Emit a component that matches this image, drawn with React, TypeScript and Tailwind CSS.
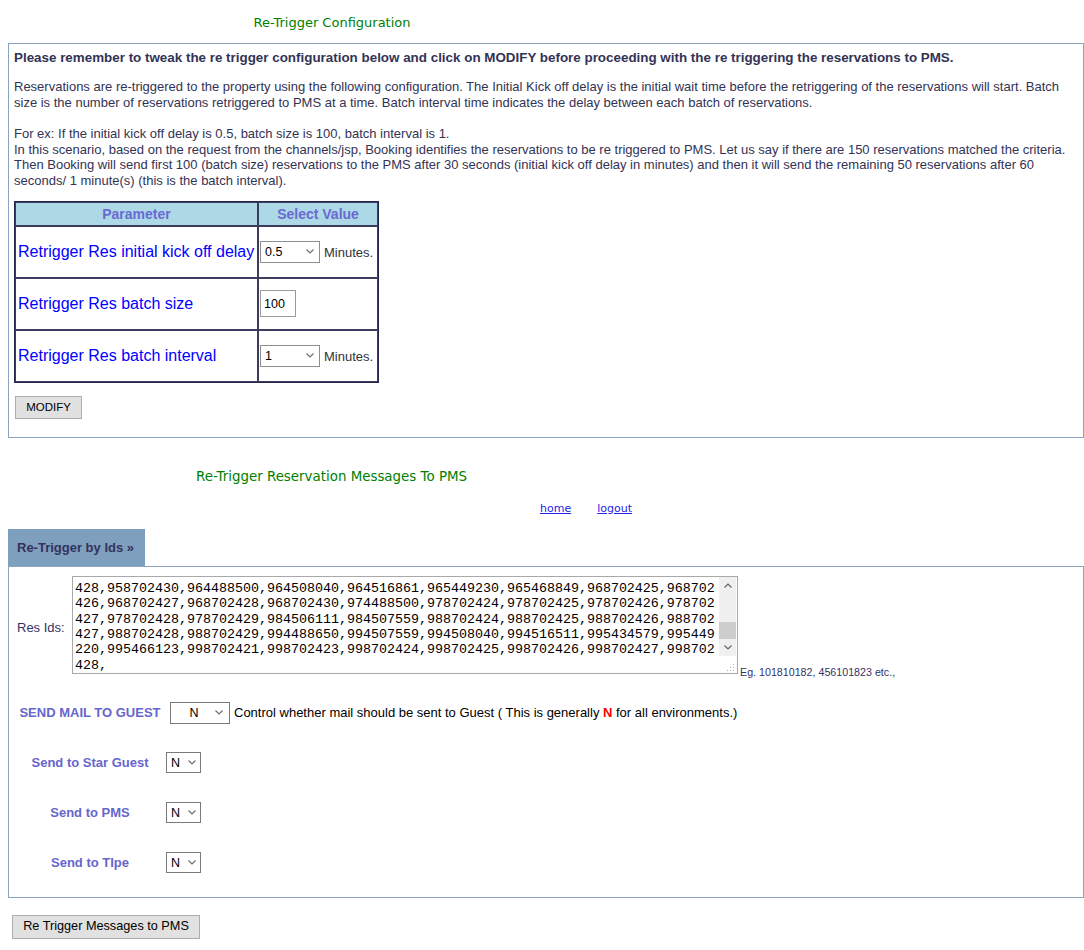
import React from "react";

const Chevron = ({ up = false, color = "#6b6b6b" }: { up?: boolean; color?: string }) => (
  <svg width="8" height="5" viewBox="0 0 8 5" className="block">
    <path d={up ? "M0.5 4.5 L4 1 L7.5 4.5" : "M0.5 0.5 L4 4 L7.5 0.5"} fill="none" stroke={color} strokeWidth="1.1" />
  </svg>
);

const lines = [
  "428,958702430,964488500,964508040,964516861,965449230,965468849,968702425,968702",
  "426,968702427,968702428,968702430,974488500,978702424,978702425,978702426,978702",
  "427,978702428,978702429,984506111,984507559,988702424,988702425,988702426,988702",
  "427,988702428,988702429,994488650,994507559,994508040,994516511,995434579,995449",
  "220,995466123,998702421,998702423,998702424,998702425,998702426,998702427,998702",
  "428,",
];

export default function App() {
  return (
    <div className="w-[1084px] min-h-[950px] bg-white font-['Liberation_Sans',Arial,sans-serif] text-[#333355]">
      {/* Title 1 */}
      <div className="pt-[15px] w-[664px] text-center font-['DejaVu_Sans',Verdana,sans-serif] text-[13px] leading-[16px] text-[#008000]">
        Re-Trigger Configuration
      </div>

      {/* Config box */}
      <div className="mt-[12px] ml-[8px] w-[1076px] border border-[#8aa3bf] px-[5px] pt-[6px] pb-[18px]">
        <div className="text-[13.4px] leading-[16px] font-bold whitespace-nowrap">
          Please remember to tweak the re trigger configuration below and click on MODIFY before proceeding with the re triggering the reservations to PMS.
        </div>
        <div className="mt-[13px] text-[13px] leading-[16px] whitespace-nowrap">
          <div>Reservations are re-triggered to the property using the following configuration. The Initial Kick off delay is the initial wait time before the retriggering of the reservations will start. Batch</div>
          <div>size is the number of reservations retriggered to PMS at a time. Batch interval time indicates the delay between each batch of reservations.</div>
        </div>
        <div className="mt-[15px] text-[13px] leading-[15.67px] whitespace-nowrap">
          <div>For ex: If the initial kick off delay is 0.5, batch size is 100, batch interval is 1.</div>
          <div>In this scenario, based on the request from the channels/jsp, Booking identifies the reservations to be re triggered to PMS. Let us say if there are 150 reservations matched the criteria.</div>
          <div>Then Booking will send first 100 (batch size) reservations to the PMS after 30 seconds (initial kick off delay in minutes) and then it will send the remaining 50 reservations after 60</div>
          <div>seconds/ 1 minute(s) (this is the batch interval).</div>
        </div>

        {/* Table */}
        <div className="mt-[12px] w-[365px] border border-[#26264a] grid grid-cols-[243px_120px]">
          <div className="h-[24px] border border-[#3c3c5e] bg-[#add8e6] flex items-center justify-center pt-[1px] text-[14px] font-bold text-[#6a6ad2]">
            Parameter
          </div>
          <div className="h-[24px] border border-[#3c3c5e] bg-[#add8e6] flex items-center justify-center pt-[1px] text-[14px] font-bold text-[#6a6ad2]">
            Select Value
          </div>

          <div className="h-[52px] border border-[#3c3c5e] flex items-center pl-[2px] text-[16px] text-[#0000ff] whitespace-nowrap">
            Retrigger Res initial kick off delay
          </div>
          <div className="h-[52px] border border-[#3c3c5e] flex items-center pl-[1px]">
            <div className="w-[60px] h-[22px] border border-[#8e8e8e] bg-white flex items-center justify-between pl-[4px] pr-[5px] text-[12.5px] text-black">
              <span className="mt-[2px]">0.5</span>
              <Chevron />
            </div>
            <span className="ml-[4px] mt-[2px] text-[13px] text-[#333]">Minutes.</span>
          </div>

          <div className="h-[52px] border border-[#3c3c5e] flex items-center pl-[2px] text-[16px] text-[#0000ff] whitespace-nowrap">
            Retrigger Res batch size
          </div>
          <div className="h-[52px] border border-[#3c3c5e] flex items-center pl-[1px]">
            <div className="w-[36px] h-[27px] border border-[#9a9a9a] bg-white flex items-center pl-[3px] pt-[1px] text-[12.5px] text-black">
              100
            </div>
          </div>

          <div className="h-[52px] border border-[#3c3c5e] flex items-center pl-[2px] text-[16px] text-[#0000ff] whitespace-nowrap">
            Retrigger Res batch interval
          </div>
          <div className="h-[52px] border border-[#3c3c5e] flex items-center pl-[1px]">
            <div className="w-[60px] h-[22px] border border-[#8e8e8e] bg-white flex items-center justify-between pl-[4px] pr-[5px] text-[12.5px] text-black">
              <span className="mt-[2px]">1</span>
              <Chevron />
            </div>
            <span className="ml-[4px] mt-[2px] text-[13px] text-[#333]">Minutes.</span>
          </div>
        </div>

        <button className="mt-[13px] ml-[1px] w-[67px] h-[23px] bg-[#e1e1e1] border border-[#adadad] text-[11.5px] text-black flex items-center justify-center">
          MODIFY
        </button>
      </div>

      {/* Title 2 */}
      <div className="mt-[31px] w-[663px] text-center font-['DejaVu_Sans',Verdana,sans-serif] text-[13.4px] leading-[16px] text-[#008000]">
        Re-Trigger Reservation Messages To PMS
      </div>

      {/* Links */}
      <div className="mt-[17px] pl-[540px] flex gap-[26px] font-['DejaVu_Sans',Verdana,sans-serif] text-[11px] leading-[14px]">
        <a href="#" className="underline text-[#2424e6]">home</a>
        <a href="#" className="underline text-[#2424e6]">logout</a>
      </div>

      {/* Tab */}
      <div className="mt-[13px] ml-[8px] w-[137px] h-[37px] bg-[#7f9fbf] flex items-center pl-[9px] pt-[2px] text-[13px] font-bold text-[#33335c]">
        Re-Trigger by Ids »
      </div>

      {/* Box 2 */}
      <div className="ml-[8px] w-[1076px] border border-[#8aa3bf] pt-[9px] pb-[23px]">
        <div className="flex">
          <div className="w-[63px] pl-[8px] self-center mt-[6px] text-[13px] text-[#333366]">Res Ids:</div>
          <div className="w-[666px] h-[98px] border border-[#a9a9a9] bg-white flex">
            <div className="w-[646px] pl-[2px] pt-[4px] overflow-hidden font-['Liberation_Mono','Courier_New',monospace] text-[13.33px] leading-[15.4px] text-black whitespace-pre">
              {lines.map((l, i) => (
                <div key={i}>{l}</div>
              ))}
            </div>
            <div className="w-[17px] flex flex-col">
              <div className="h-[79px] bg-[#f0f0f0] flex flex-col">
                <div className="h-[17px] flex items-center justify-center">
                  <Chevron up color="#606060" />
                </div>
                <div className="flex-1 flex flex-col justify-end">
                  <div className="h-[17px] bg-[#cdcdcd]" />
                </div>
                <div className="h-[17px] flex items-center justify-center">
                  <Chevron color="#606060" />
                </div>
              </div>
              <div className="flex-1 flex items-end justify-end pr-[1px] pb-[1px]">
                <svg width="8" height="8" viewBox="0 0 8 8">
                  <rect x="6" y="0" width="1" height="1" fill="#b0b0b0" />
                  <rect x="3" y="3" width="1" height="1" fill="#b0b0b0" />
                  <rect x="6" y="3" width="1" height="1" fill="#b0b0b0" />
                  <rect x="0" y="6" width="1" height="1" fill="#b0b0b0" />
                  <rect x="3" y="6" width="1" height="1" fill="#b0b0b0" />
                  <rect x="6" y="6" width="1" height="1" fill="#b0b0b0" />
                </svg>
              </div>
            </div>
          </div>
          <div className="self-end mb-[-5px] ml-[2px] text-[10.7px] leading-[13px] text-[#333366] whitespace-nowrap">
            Eg. 101810182, 456101823 etc.,
          </div>
        </div>

        <div className="mt-[28px] flex flex-col gap-[28px]">
          <div className="flex items-center h-[22px]">
            <div className="ml-[1px] w-[160px] text-center text-[13px] font-bold text-[#6666cc] whitespace-nowrap">SEND MAIL TO GUEST</div>
            <div className="w-[60px] h-[22px] border border-[#7a7a7a] bg-white flex items-center pr-[6px] text-[12.5px] text-black">
              <span className="flex-1 text-center pl-[2px] mt-[1px]">N</span>
              <Chevron />
            </div>
            <span className="ml-[4px] text-[13px] text-black whitespace-nowrap">
              Control whether mail should be sent to Guest ( This is generally <b className="text-[#ff0000]">N</b> for all environments.)
            </span>
          </div>
          {["Send to Star Guest", "Send to PMS", "Send to TIpe"].map((t) => (
            <div key={t} className="flex items-center h-[22px]">
              <div className="ml-[5px] w-[152px] text-center text-[13px] font-bold text-[#6666cc] whitespace-nowrap">{t}</div>
              <div className="w-[35px] h-[21px] border border-[#7a7a7a] bg-white flex items-center justify-between pl-[4px] pr-[4px] text-[12.5px] text-black">
                <span className="mt-[1px]">N</span>
                <Chevron />
              </div>
            </div>
          ))}
        </div>
      </div>

      <button className="mt-[17px] ml-[12px] w-[188px] h-[24px] bg-[#e1e1e1] border border-[#adadad] text-[12.7px] text-black flex items-center justify-center">
        Re Trigger Messages to PMS
      </button>
    </div>
  );
}
